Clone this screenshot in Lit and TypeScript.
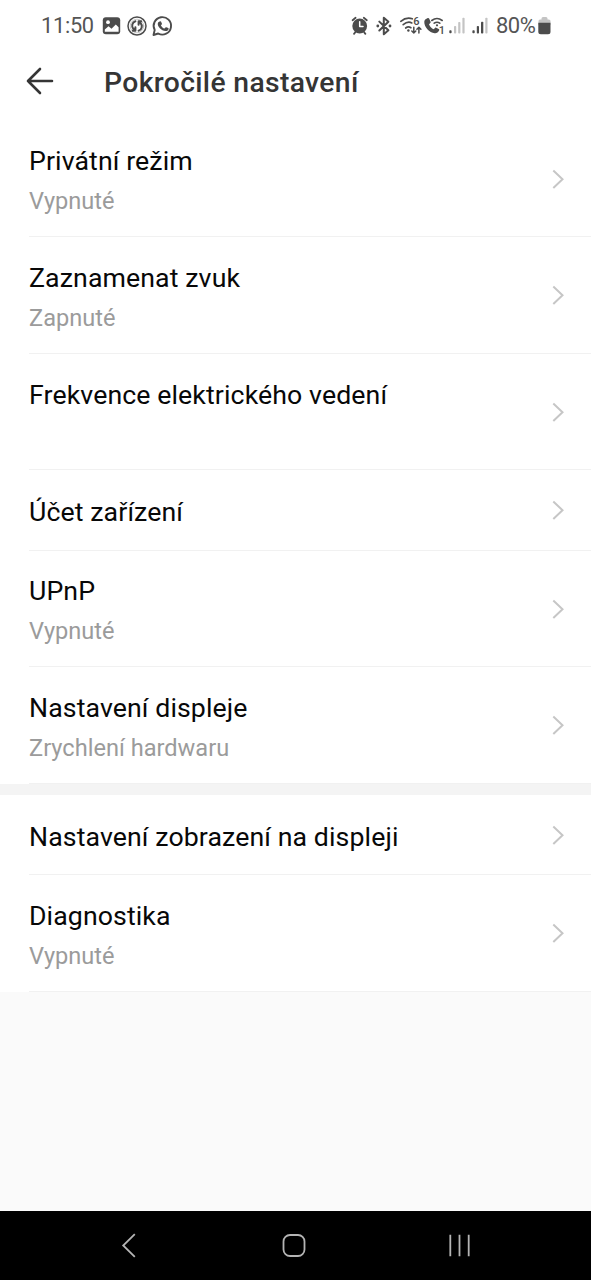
import { LitElement, html, css, nothing } from "lit";
import { customElement, property } from "lit/decorators.js";

@customElement("status-bar")
class StatusBar extends LitElement {
  static styles = css`
    :host { display: flex; height: 50px; align-items: stretch; justify-content: space-between; padding: 0 39px 0 41px; color: #555; font: 400 22px/50px Roboto, sans-serif; }
    .side { display: flex; }
    .time { width: 61px; font-size: 21.800px; letter-spacing: -0.3px; padding-top: 1px; }
    .pct { width: 41px; padding-top: 1px; letter-spacing: -0.5px; white-space: nowrap; }
    svg { display: block; fill: none; stroke: #4c4c4c; stroke-linecap: round; stroke-linejoin: round; }
    .solid { fill: #4c4c4c; stroke: none; }
    .pale { fill: #c4c4c4; stroke: none; }
    .cut { fill: #fff; stroke: none; }
    .num { fill: #4c4c4c; stroke: none; font: 500 11px Roboto, sans-serif; }
  `;
  render() {
    return html`
      <div class="side">
        <span class="time">11:50</span>
        <svg width="78" height="50" viewBox="102 0 78 50">
          <rect class="solid" x="102.8" y="17.3" width="17.4" height="17" rx="3" />
          <circle class="cut" cx="108" cy="22.2" r="1.9" />
          <path class="cut" d="M104.8 31.8v-2.2l3.7-3.3 3 2.5 4.3-4.3 2.8 2.8v4.5z" />
          <circle cx="137" cy="26" r="9" stroke-width="1.5" />
          <circle cx="137" cy="26" r="6.8" stroke-width=".6" opacity=".5" />
          <path stroke-width="2" d="M135.400 21.200c-3.400 1-4.200 5.200-2 7.800l2 1.500m0-3.200v3.500h-2.600M138.600 30.800c3.400-1 4.200-5.200 2-7.800l-2-1.500m0 3.200v-3.500h2.600" />
          <path stroke-width="1.9" d="M153.500 35l1.200-5a8.700 8.700 0 1 1 3.500 3.500z" />
          <path class="solid" d="M158.700 22l1.400-.7c.5-.2.800 0 1 .4l.8 1.900c.1.300 0 .6-.2.800l-.8 1c1 1.700 2 2.500 3.600 3.200l1-1.200c.3-.3.600-.3.900-.2l1.800.9c.4.200.5.500.4.900-.3 1.400-1.500 2.200-3 2.100-4.300-.4-8.400-5-7.800-7.700.1-.6.400-1.100.9-1.400z" />
        </svg>
      </div>
      <div class="side">
        <svg width="146" height="50" viewBox="350 0 146 50">
          <circle class="solid" cx="359.700" cy="26" r="7.400" />
          <path stroke-width="1.800" d="M352.600 20.200l3-2.400M366.800 20.200l-3-2.400M355.300 32.200l-1.300 1.700M364.100 32.200l1.300 1.700" />
          <path stroke="#fff" stroke-width="1.500" d="M359.700 21.700v4.700h3.300" />
          <path stroke-width="2" d="M379.300 21.600l9.100 8.700-4.600 4v-16.600l4.600 4-9.100 8.800" />
          <circle class="solid" cx="377.800" cy="26" r="1.400" />
          <circle class="solid" cx="390" cy="26" r="1.400" />
          <path stroke-width="1.700" d="M400.800 21.300q5.500-4.500 11.500-2.500M403.200 24.700q4.500-3.800 8.600-1.800M405.700 28q2.600-2 5.200-.3" />
          <circle class="solid" cx="408.400" cy="30.500" r="1.200" />
          <text class="num" x="413.300" y="24.500">6</text>
          <path stroke-width="1.500" d="M413.800 27.300v5.700m-2-2l2 2 2-2M418.900 33v-5.700m-2 2l2-2 2 2" />
          <path class="solid" d="M426 19l1.800-1c.6-.3 1 0 1.300.5l1.500 3.300c.2.500.1.900-.3 1.200l-1.300 1.200c1 2.500 2.400 4 4.700 5.100l1.300-1.400c.4-.4.800-.4 1.200-.2l2.500 1.300c.6.300.7.700.5 1.300-.9 2.200-2.600 3.200-4.500 3-5.400-.5-10.600-6.700-10.400-11.300 0-1.200.6-2.300 1.700-3z" />
          <path stroke-width="1.600" d="M431.800 20.500q5.200-4 10.400 0M434.200 23.200q2.800-2 5.600 0" />
          <circle class="solid" cx="437" cy="25.300" r="1.100" />
          <text class="num" x="438.800" y="34">1</text>
          <rect class="solid" x="449.300" y="30.300" width="2.300" height="3" rx=".8" />
          <rect class="pale" x="454" y="26" width="2.200" height="7.500" rx=".8" />
          <rect class="pale" x="458.200" y="22" width="2.200" height="11.500" rx=".8" />
          <rect class="pale" x="462.400" y="17.700" width="2.200" height="15.800" rx=".8" />
          <rect class="solid" x="472.400" y="30.300" width="2.300" height="3" rx=".8" />
          <rect class="solid" x="476.800" y="26" width="2.200" height="7.500" rx=".8" />
          <rect class="solid" x="481" y="21.800" width="2.300" height="11.700" rx=".8" />
          <rect class="pale" x="485.300" y="17.700" width="2.200" height="15.800" rx=".8" />
        </svg>
        <span class="pct">80%</span>
        <svg width="15" height="50" viewBox="537 0 15 50">
          <path class="pale" d="M538.500 25v-4q0-1.500 1.500-1.500h1.500v-1q0-1.500 1.500-1.500h3q1.500 0 1.500 1.500v1h1.300q1.700 0 1.700 1.500v4z" />
          <path class="solid" d="M538.300 22.800h12.200v9q0 2.500-2.500 2.500h-7.200q-2.500 0-2.500-2.500z" />
        </svg>
      </div>`;
  }
}

@customElement("setting-row")
class SettingRow extends LitElement {
  @property() label = "";
  @property() value?: string;
  static styles = css`
    :host { display: flex; align-items: center; justify-content: space-between; box-sizing: border-box; height: 116.600px; margin-left: 29px; padding-right: 26px; border-bottom: 1px solid #f1f1f1; font-family: Roboto, sans-serif; }
    :host([compact]) { height: 80.200px; }
    .text { display: flex; flex-direction: column; padding-top: 6px; }
    :host([compact]) .text { padding-top: 5px; }
    .label { font-size: 26.700px; letter-spacing: 0.100px; line-height: 40px; color: #080808; }
    .value { font-size: 23.600px; line-height: 40px; height: 40px; color: #9b9b9b; }
    svg { display: block; fill: none; stroke: #c6c6c6; stroke-width: 2; padding-top: 1px; }
  `;
  render() {
    return html`
      <div class="text">
        <span class="label">${this.label}</span>
        ${this.value === undefined ? nothing : html`<span class="value">${this.value}</span>`}
      </div>
      <svg width="14" height="22" viewBox="0 0 14 22"><path d="M2.300 2.500l9.200 8.700-9.200 8.700" /></svg>`;
  }
}

const general: [string, string?][] = [
  ["Privátní režim", "Vypnuté"],
  ["Zaznamenat zvuk", "Zapnuté"],
  ["Frekvence elektrického vedení", ""],
  ["Účet zařízení"],
  ["UPnP", "Vypnuté"],
  ["Nastavení displeje", "Zrychlení hardwaru"],
];
const extra: [string, string?][] = [["Nastavení zobrazení na displeji"], ["Diagnostika", "Vypnuté"]];

@customElement("app-root")
class AppRoot extends LitElement {
  static styles = css`
    :host { display: flex; flex-direction: column; width: 591px; height: 1280px; overflow: hidden; background: #fafafa; font-family: Roboto, sans-serif; }
    .top { background: #fff; }
    .header { display: flex; align-items: center; height: 70.600px; padding: 0 26px 8.600px; box-sizing: border-box; gap: 50px; }
    .header svg { display: block; fill: none; stroke: #353535; stroke-width: 2.600; stroke-linecap: round; stroke-linejoin: round; }
    h1 { margin: 0; padding-top: 3px; font-size: 28.300px; letter-spacing: 0.350px; line-height: 40px; font-weight: 500; color: #353535; }
    .group { background: #fff; }
    .band { height: 11.200px; background: #f4f4f4; }
    .nav { display: flex; align-items: center; height: 69px; margin-top: auto; background: #000; }
    .nav svg { display: block; fill: none; stroke: #b4b4b4; stroke-width: 1.800; }
  `;
  private rows(items: [string, string?][]) {
    return items.map(([label, value]) => html`<setting-row .label=${label} .value=${value} ?compact=${value === undefined}></setting-row>`);
  }
  render() {
    return html`
      <div class="top">
        <status-bar></status-bar>
        <div class="header">
          <svg width="28" height="28" viewBox="0 0 28 28"><path d="M26 14H2M14 2L2 14l12 12" /></svg>
          <h1>Pokročilé nastavení</h1>
        </div>
      </div>
      <div class="group">${this.rows(general)}</div>
      <div class="band"></div>
      <div class="group">${this.rows(extra)}</div>
      <div class="nav">
        <svg width="591" height="69" viewBox="0 1211 591 69">
          <path d="M134.800 1234.200l-11.600 11.300 11.600 11.300" />
          <rect x="283.500" y="1235" width="21" height="21" rx="6.500" />
          <path d="M450.300 1234.700v21.500M459.500 1234.700v21.500M468.700 1234.700v21.500" />
        </svg>
      </div>`;
  }
}
